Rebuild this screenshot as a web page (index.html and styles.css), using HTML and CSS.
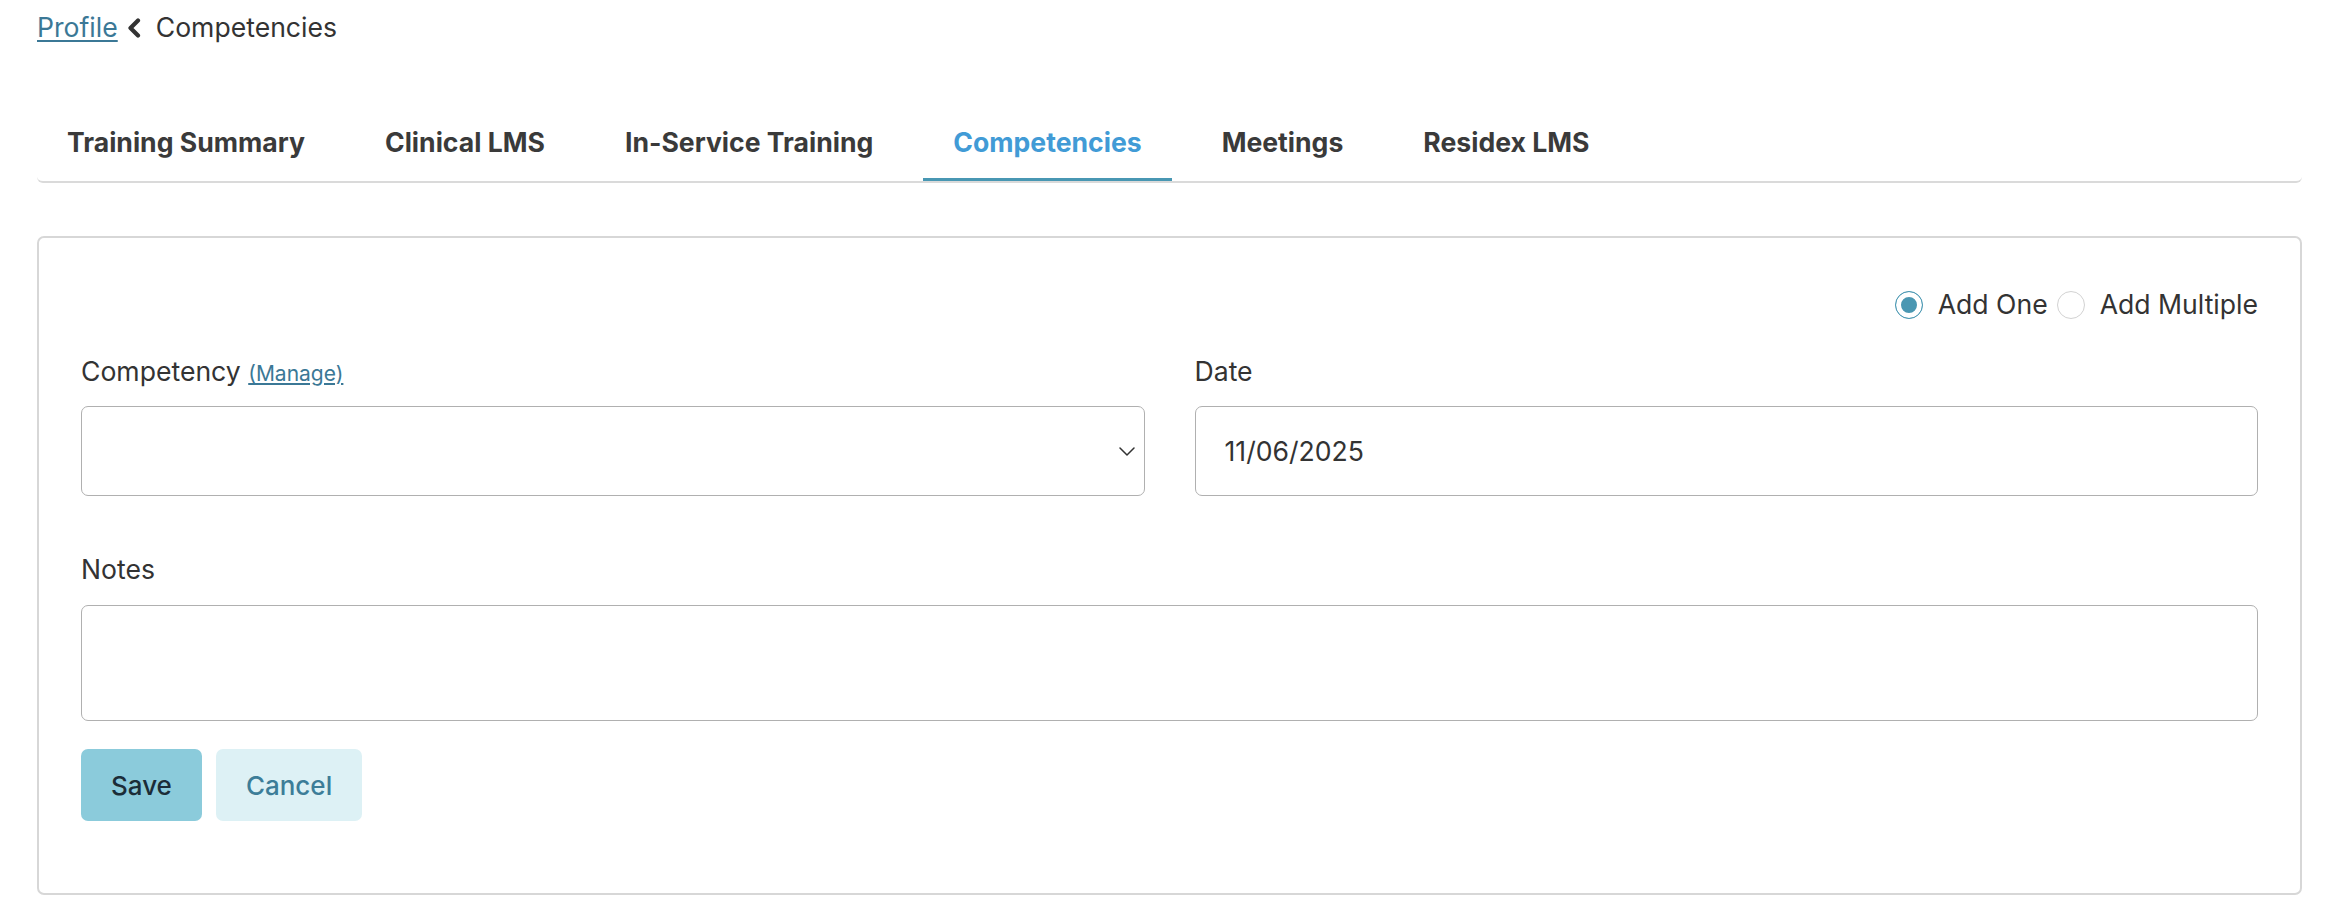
FILE: index.html
```html
<!DOCTYPE html>
<html lang="en">
<head>
<meta charset="utf-8">
<title>Competencies</title>
<link rel="stylesheet" href="styles.css">
</head>
<body>
<div class="page">
  <nav class="crumbs">
    <a class="crumb-link" href="#">Profile</a>
    <svg class="crumb-sep" viewBox="0 0 14 20" aria-hidden="true"><path d="M11 2.5 L3.5 10 L11 17.5" fill="none" stroke="#333" stroke-width="4.2" stroke-linecap="round" stroke-linejoin="round"/></svg>
    <span class="crumb-current">Competencies</span>
  </nav>

  <ul class="tabs">
    <li class="tab">Training Summary</li>
    <li class="tab">Clinical LMS</li>
    <li class="tab">In-Service Training</li>
    <li class="tab is-active">Competencies</li>
    <li class="tab">Meetings</li>
    <li class="tab">Residex LMS</li>
  </ul>

  <section class="card">
    <div class="mode">
      <label class="radio-opt"><span class="radio is-checked"></span>Add One</label>
      <label class="radio-opt"><span class="radio"></span>Add Multiple</label>
    </div>

    <div class="row">
      <div class="field">
        <div class="label">Competency <a class="manage" href="#">(Manage)</a></div>
        <div class="control select">
          <svg class="select-caret" viewBox="0 0 16 9" aria-hidden="true"><path d="M1 1 L8 8 L15 1" fill="none" stroke="#333" stroke-width="1.5" stroke-linecap="round" stroke-linejoin="round"/></svg>
        </div>
      </div>
      <div class="field">
        <div class="label">Date</div>
        <div class="control input">11/06/2025</div>
      </div>
    </div>

    <div class="field notes">
      <div class="label">Notes</div>
      <div class="control textarea"></div>
    </div>

    <div class="actions">
      <button class="btn btn-save" type="button">Save</button>
      <button class="btn btn-cancel" type="button">Cancel</button>
    </div>
  </section>
</div>
</body>
</html>
```

FILE: styles.css
```css
html, body {
  margin: 0;
  background: #fff;
}

body {
  font-family: Inter, "Noto Sans", sans-serif;
  font-size: 26.6px;
  line-height: 39px;
  color: #333;
}

.page {
  padding: 8px 40px 0 37px;
}

/* breadcrumb */
.crumbs {
  display: flex;
  align-items: center;
  height: 39px;
}

.crumb-link {
  color: #3b7896;
  text-decoration: underline;
  text-underline-offset: 3px;
  text-decoration-thickness: 2px;
}

.crumb-sep {
  width: 14px;
  height: 20px;
  margin: 0 15px 0 9px;
}

.crumb-current {
  color: #333;
}

/* tabs */
.tabs {
  list-style: none;
  margin: 54px 0 0;
  padding: 0;
  display: flex;
  gap: 20px;
  border-bottom: 2px solid #dadada;
  border-radius: 0 0 6px 6px;
}

.tab {
  padding: 23px 30px 18px;
  line-height: 36px;
  font-size: 26.6px;
  font-weight: 700;
  color: #3a3a3a;
  border-bottom: 3px solid transparent;
}

.tab.is-active {
  color: #419bd6;
  border-bottom-color: #4897b3;
}

/* card */
.card {
  margin-top: 53px;
  border: 2px solid #d7d7d7;
  border-radius: 7px;
  padding: 47px 42px 72px;
}

.mode {
  display: flex;
  justify-content: flex-end;
  gap: 9px;
}

.radio-opt {
  display: flex;
  align-items: center;
  gap: 15px;
}

.radio {
  width: 28px;
  height: 28px;
  box-sizing: border-box;
  border-radius: 50%;
  border: 1px solid #d2d2d2;
  background: #fff;
}

.radio.is-checked {
  border-color: #4a98b3;
  background: #4a97b2;
  box-shadow: inset 0 0 0 5px #fff;
}

.row {
  display: grid;
  grid-template-columns: 1fr 1fr;
  gap: 50px;
  margin-top: 28px;
}

.label {
  height: 39px;
  margin-bottom: 15px;
}

.manage {
  font-size: 21px;
  line-height: 1;
  color: #3b7896;
  text-decoration: underline;
}

.control {
  box-sizing: border-box;
  border: 1px solid #b0b0b0;
  border-radius: 7px;
  background: #fff;
}

.select,
.input {
  height: 90px;
  display: flex;
  align-items: center;
}

.select {
  justify-content: flex-end;
  padding-right: 9px;
}

.select-caret {
  width: 16px;
  height: 9px;
}

.input {
  padding-left: 29px;
}

.notes {
  margin-top: 54px;
}

.notes .label {
  margin-bottom: 16px;
}

.textarea {
  height: 116px;
}

.actions {
  display: flex;
  gap: 14px;
  margin-top: 28px;
}

.btn {
  height: 72px;
  padding: 0 30px;
  border: 0;
  border-radius: 7px;
  font-family: Inter, "Noto Sans", sans-serif;
  font-size: 26px;
  font-weight: 500;
}

.btn-save {
  background: #8bcbdb;
  color: #1b2d38;
}

.btn-cancel {
  background: #ddf1f5;
  color: #3c7d98;
}
```
